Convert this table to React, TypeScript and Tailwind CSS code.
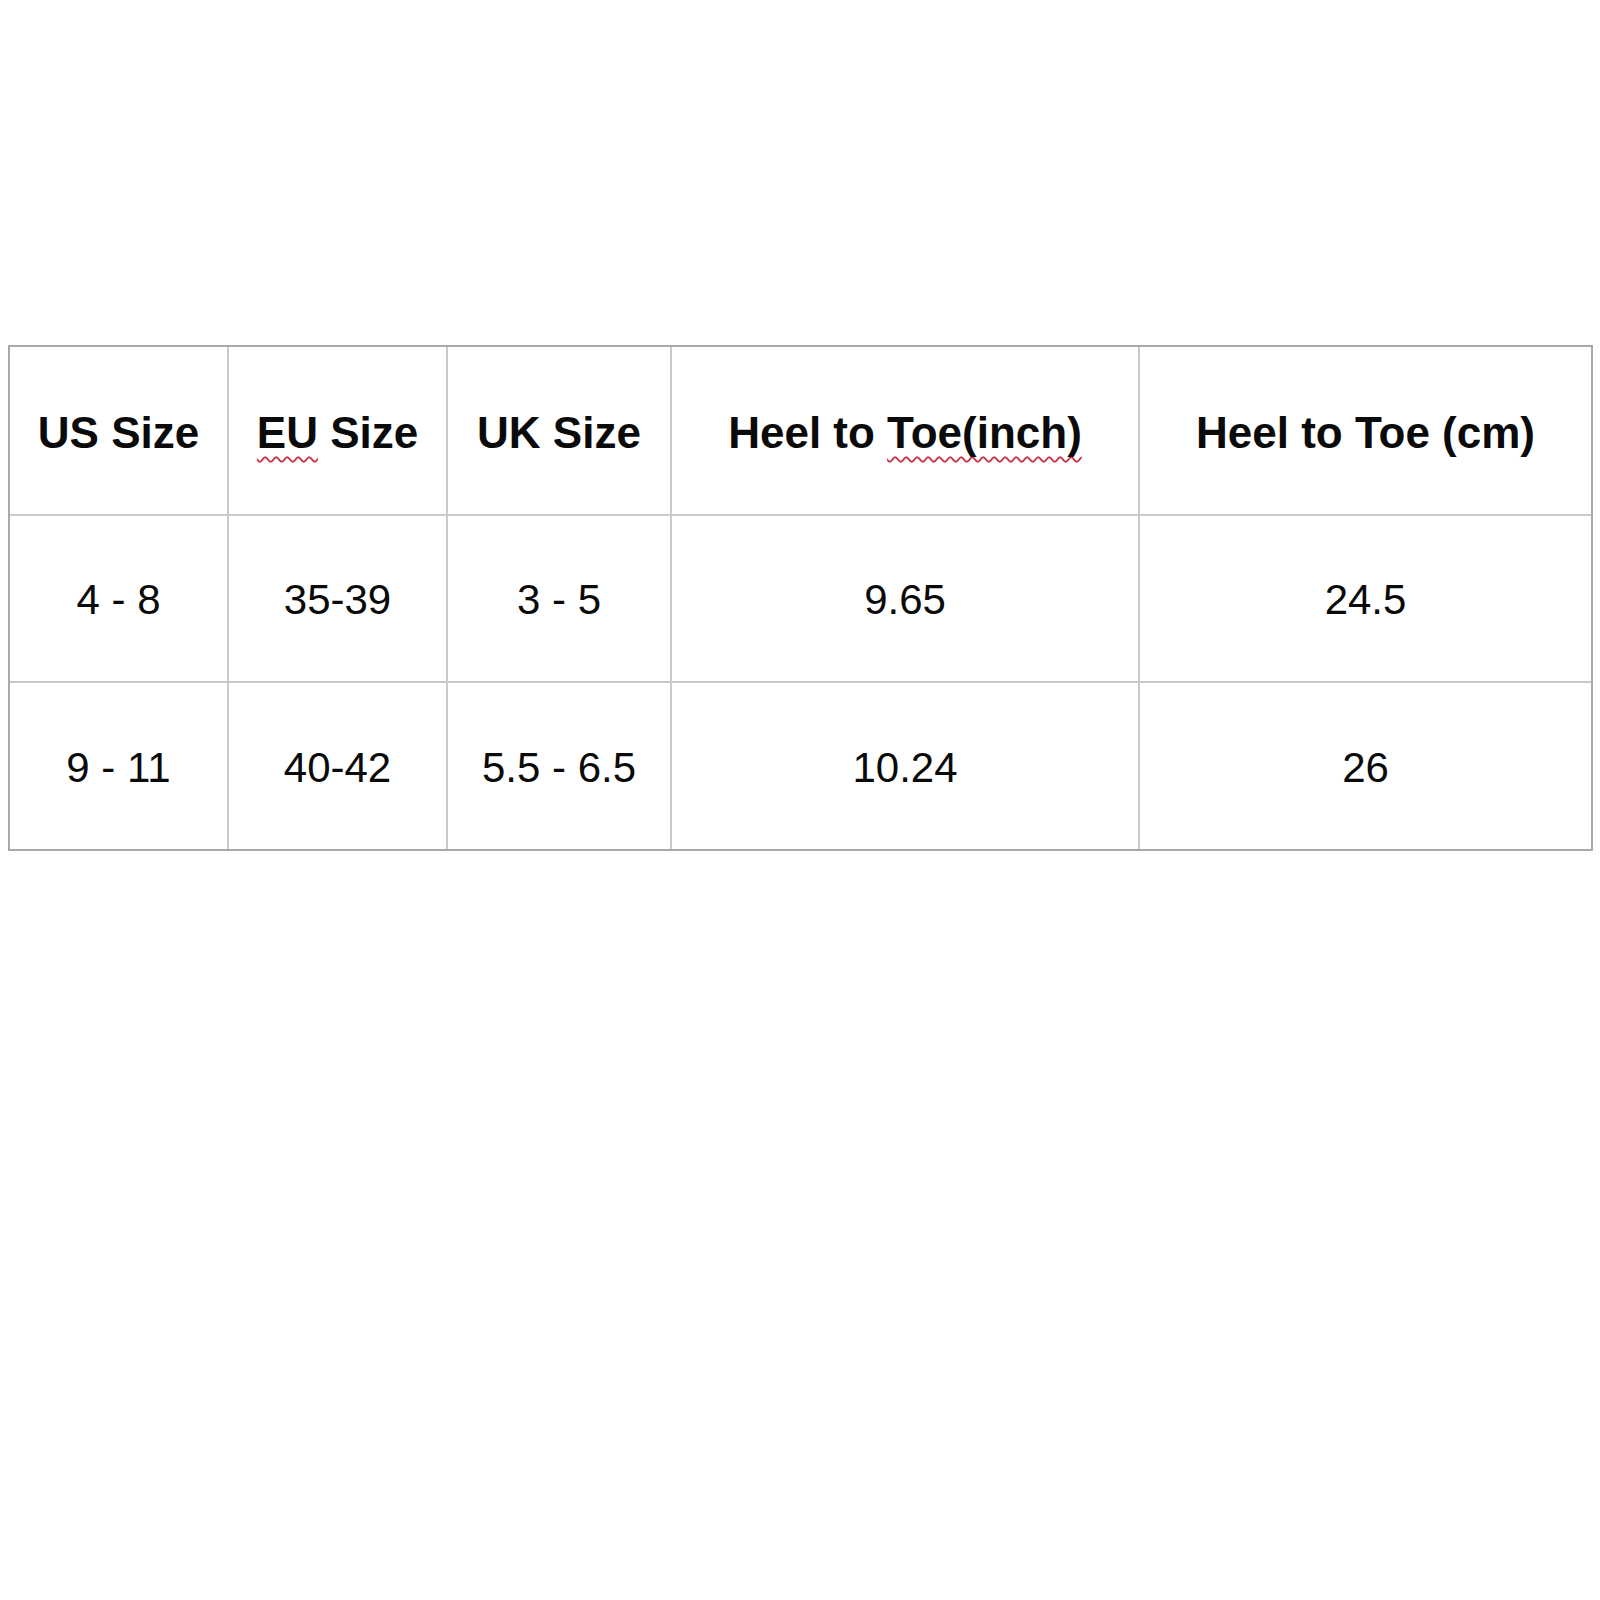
import React from "react";

const squiggle =
  "underline decoration-wavy decoration-[#c8384a] decoration-[1.5px] underline-offset-[8px] [text-decoration-skip-ink:none]";

const headers: { label: React.ReactNode }[] = [
  { label: "US Size" },
  {
    label: (
      <>
        <span className={squiggle}>EU</span> Size
      </>
    ),
  },
  { label: "UK Size" },
  {
    label: (
      <>
        Heel to <span className={squiggle}>Toe(inch)</span>
      </>
    ),
  },
  { label: "Heel to Toe (cm)" },
];

const rows: string[][] = [
  ["4 - 8", "35-39", "3 - 5", "9.65", "24.5"],
  ["9 - 11", "40-42", "5.5 - 6.5", "10.24", "26"],
];

export default function App() {
  return (
    <div className="w-[1600px] h-[1600px] bg-white pt-[345px] pl-[8px]">
      <div
        className="w-[1585px] border-2 border-[#a9a9a9] grid grid-cols-[219px_219px_224px_468px_451px] grid-rows-[169px_167px_166px] text-[#0a0a0a]"
        style={{ fontFamily: '"Liberation Sans", Arial, sans-serif' }}
      >
        {headers.map((h, i) => (
          <div
            key={i}
            className={`flex items-center justify-center border-b-2 border-[#c9c9c9] text-[44px] font-bold pt-[5px] ${
              i < 4 ? "border-r-2" : ""
            }`}
          >
            <span>{h.label}</span>
          </div>
        ))}
        {rows.map((r, ri) =>
          r.map((c, ci) => (
            <div
              key={`${ri}-${ci}`}
              className={`flex items-center justify-center border-[#c9c9c9] text-[42px] pt-[2px] ${
                ci < 4 ? "border-r-2" : ""
              } ${ri === 0 ? "border-b-2" : ""}`}
            >
              {c}
            </div>
          ))
        )}
      </div>
    </div>
  );
}
